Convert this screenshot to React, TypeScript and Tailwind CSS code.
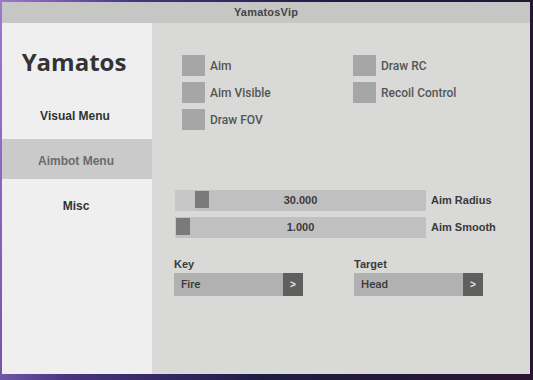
const checks = [
  ["Aim", "Draw RC"],
  ["Aim Visible", "Recoil Control"],
  ["Draw FOV", null],
];

function Check({ label }: { label: string }) {
  return (
    <div className="flex items-center gap-[5px]">
      <div className="h-[21px] w-[23px] bg-[#a6a6a6]" />
      <span className="font-['Roboto',sans-serif] text-[12px] font-medium text-[#555]">
        {label}
      </span>
    </div>
  );
}

function Slider({
  value,
  label,
  thumbLeft,
}: {
  value: string;
  label: string;
  thumbLeft: number;
}) {
  return (
    <div className="flex items-center gap-[5px]">
      <div className="relative flex h-[21px] w-[251px] items-center justify-center bg-[#c0c0c0]">
        <div
          className="absolute inset-y-0 left-0 bg-[#c7c7c7]"
          style={{ width: thumbLeft }}
        />
        <div
          className="absolute top-[1px] h-[17px] w-[14px] bg-[#7a7a78]"
          style={{ left: thumbLeft }}
        />
        <span className="relative text-[11px] font-bold text-[#3a3a3a]">
          {value}
        </span>
      </div>
      <span className="text-[11px] font-bold text-[#3a3a3a]">{label}</span>
    </div>
  );
}

function Combo({ label, value }: { label: string; value: string }) {
  return (
    <div className="flex w-[129px] flex-col">
      <span className="mb-[2px] text-[11px] font-bold leading-[14px] text-[#3a3a3a]">
        {label}
      </span>
      <div className="flex h-[23px] bg-[#b1b1b1]">
        <span className="flex-1 pl-[7px] font-['Roboto',sans-serif] text-[11.5px] leading-[23px] font-medium text-[#3a3a3a]">
          {value}
        </span>
        <div className="flex w-[20px] items-center justify-center bg-[#5f5f5e] text-[10px] font-bold text-[#e6e6e6]">
          &gt;
        </div>
      </div>
    </div>
  );
}

export default function App() {
  return (
    <div className="h-[380px] w-[533px] overflow-hidden bg-[linear-gradient(100deg,#9a7ad0_0%,#4a3480_22%,#1e1c44_55%,#2a1430_100%)] pl-[2px] pt-[2px] font-['Liberation_Sans',Arial,sans-serif]">
      <div className="flex h-[372px] w-[528px] flex-col">
        <div className="flex h-[21px] items-center justify-center bg-[#c6c6c5] text-[11px] font-bold tracking-[0.2px] text-[#444]">
          YamatosVip
        </div>
        <div className="flex flex-1">
          <aside className="flex w-[150px] flex-col bg-[#efefef]">
            <h1 className="mb-[15px] pr-[6px] pt-[22px] text-center font-['Open_Sans',sans-serif] text-[24px] font-bold leading-[34px] text-[#333]">
              Yamatos
            </h1>
            <div className="flex flex-col gap-[5px]">
              <div className="flex h-[40px] items-center justify-center pr-[4px] pt-[3px] text-[12px] font-bold text-[#333]">
                Visual Menu
              </div>
              <div className="flex h-[40px] items-center justify-center bg-[#cacaca] pr-[2px] pt-[3px] text-[12px] font-bold text-[#6b6b6b]">
                Aimbot Menu
              </div>
              <div className="flex h-[40px] items-center justify-center pr-[2px] pt-[3px] text-[12px] font-bold text-[#333]">
                Misc
              </div>
            </div>
          </aside>
          <main className="flex flex-1 flex-col bg-[#d9d9d7]">
            <div className="ml-[30px] mt-[32px] grid grid-cols-[171px_1fr] gap-y-[6px]">
              {checks.map(([a, b], i) => (
                <div key={i} className="contents">
                  <Check label={a as string} />
                  {b ? <Check label={b} /> : <div />}
                </div>
              ))}
            </div>
            <div className="ml-[23px] mt-[60px] flex flex-col gap-[6px]">
              <Slider value="30.000" label="Aim Radius" thumbLeft={20} />
              <Slider value="1.000" label="Aim Smooth" thumbLeft={1} />
            </div>
            <div className="ml-[22px] mt-[19px] flex gap-[51px]">
              <Combo label="Key" value="Fire" />
              <Combo label="Target" value="Head" />
            </div>
          </main>
        </div>
      </div>
    </div>
  );
}
